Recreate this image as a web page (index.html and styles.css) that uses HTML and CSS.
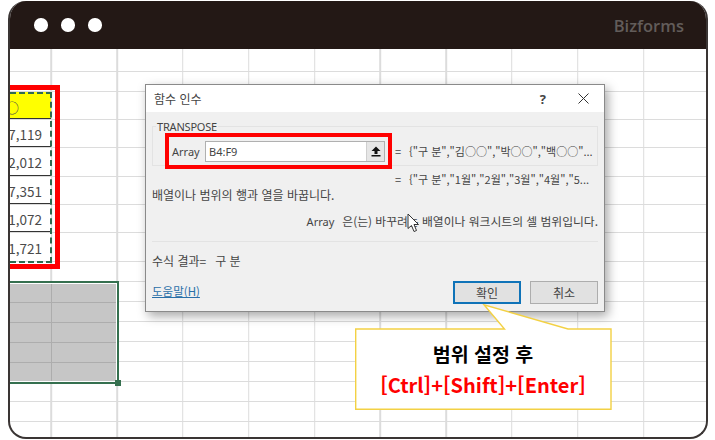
FILE: index.html
```html
<!doctype html>
<html lang="ko">
  <head>
    <meta charset="utf-8">
    <meta name="viewport" content="width=device-width, initial-scale=1">
    <title>함수 인수</title>
    <link rel="stylesheet" href="styles.css">
  </head>
  <body>
    <div class="window">
      <div class="titlebar">
        <div class="dots">
          <span class="dot"></span>
          <span class="dot"></span>
          <span class="dot"></span>
        </div>
        <div class="brand">Bizforms</div>
      </div>

      <div class="sheet">
        <div class="row row-23"></div>
        <div class="row row-20"></div>
        <div class="row row-28"><div class="cell cell-head">○</div></div>
        <div class="row row-28"><div class="cell">7,119</div></div>
        <div class="row row-29"><div class="cell">2,012</div></div>
        <div class="row row-28"><div class="cell">7,351</div></div>
        <div class="row row-28"><div class="cell">1,072</div></div>
        <div class="row row-29"><div class="cell cell-last">1,721</div></div>
        <div class="row row-20"></div>
        <div class="row row-20"></div>
        <div class="row row-20"></div>
        <div class="row row-20"></div>
        <div class="row row-20"></div>
        <div class="row row-20"></div>
        <div class="row row-20"></div>
        <div class="row row-20"></div>
      </div>
    </div>

    <!-- things lying over the sheet -->
    <div class="marching-ants"></div>
    <div class="red-frame"></div>
    <div class="selection"><span class="fill-handle"></span></div>

    <div class="dialog">
      <div class="dialog-title">
        <span>함수 인수</span>
        <div class="dialog-controls">
          <span class="help-mark">?</span>
          <svg class="close-icon" width="11" height="11" viewBox="0 0 11 11">
            <path d="M0.5 0.5 L10.5 10.5 M10.5 0.5 L0.5 10.5" stroke="#333" stroke-width="1" fill="none"/>
          </svg>
        </div>
      </div>

      <div class="dialog-body">
        <div class="group">
          <span class="group-name">TRANSPOSE</span>
          <div class="arg-row">
            <span class="arg-label">Array</span>
            <div class="arg-input">
              <span class="arg-value">B4:F9</span>
              <span class="arg-button">
                <svg width="10" height="11" viewBox="0 0 10 11">
                  <path d="M5 0.5 L9.5 5 H6.5 V8 H3.5 V5 H0.5 Z" fill="#111"/>
                  <rect x="0.5" y="9" width="9" height="1.5" fill="#111"/>
                </svg>
              </span>
            </div>
          </div>
          <div class="arg-result">
            <span class="equals">=</span>
            <span>{"구 분","김○○","박○○","백○○"...</span>
          </div>
        </div>

        <div class="arg-result arg-result-2">
          <span class="equals">=</span>
          <span>{"구 분","1월","2월","3월","4월","5...</span>
        </div>

        <p class="desc">배열이나 범위의 행과 열을 바꿉니다.</p>
        <p class="arg-desc"><span class="arg-desc-name">Array</span>은(는) 바꾸려는 배열이나 워크시트의 셀 범위입니다.</p>

        <div class="divider"></div>
        <p class="result">수식 결과=<span class="result-value">구 분</span></p>

        <div class="dialog-foot">
          <span class="help-link">도움말(H)</span>
          <div class="buttons">
            <span class="btn btn-primary">확인</span>
            <span class="btn">취소</span>
          </div>
        </div>
      </div>
    </div>

    <svg class="cursor" width="13" height="20" viewBox="0 0 13 20">
      <path d="M1 1 V15.5 L4.5 12.5 L7 18.5 L9.5 17.5 L7 11.5 H11.5 Z" fill="#fff" stroke="#333" stroke-width="1"/>
    </svg>

    <div class="callout">
      <svg class="callout-shape" width="257" height="106" viewBox="0 0 257 106">
        <path d="M0.7 25 H149.5 L129 0.8 L213 25 H256 V105.3 H0.7 Z" fill="#fff" stroke="#f3d144" stroke-width="1.4"/>
      </svg>
      <div class="callout-text">
        <div class="callout-title">범위 설정 후</div>
        <div class="callout-keys">[Ctrl]+[Shift]+[Enter]</div>
      </div>
    </div>
  </body>
</html>
```

FILE: styles.css
```css
/* Reset */
* {
  margin: 0;
  padding: 0;
  box-sizing: border-box;
}

body {
  width: 715px;
  height: 440px;
  overflow: hidden;
  background-color: #fff;
  font-family: "Noto Sans CJK KR", "Noto Sans", sans-serif;
  color: #333;
}

/* Browser window frame */
.window {
  width: 700px;
  height: 438px;
  margin: 1px 0 0 8px;
  border: 2px solid #3a3534;
  border-top: none;
  border-radius: 18px;
  overflow: hidden;
  background-color: #fff;
}

.titlebar {
  height: 48px;
  display: flex;
  align-items: center;
  justify-content: space-between;
  padding: 0 22px 0 24px;
  background-color: #231815;
}

.dots {
  display: flex;
  gap: 13.5px;
}

.dot {
  width: 13.5px;
  height: 13.5px;
  border-radius: 50%;
  background-color: #fff;
}

.brand {
  font-family: "Open Sans", sans-serif;
  font-size: 16.5px;
  font-weight: 600;
  color: #625c5a;
}

/* Spreadsheet */
.sheet {
  height: 389px;
  background-image: repeating-linear-gradient(90deg, transparent 0, transparent 64.3px, #dcdcdc 64.3px, #dcdcdc 65.8px);
  background-position: -23.8px 0;
}

.row {
  border-bottom: 1.5px solid #dcdcdc;
}
.row-20 { height: 20px; }
.row-23 { height: 23px; }
.row-28 { height: 28px; }
.row-29 { height: 29px; }

.cell {
  width: 41px;
  height: 100%;
  display: flex;
  align-items: center;
  justify-content: flex-end;
  padding: 1px 9px 0 0;
  overflow: hidden;
  white-space: nowrap;
  font-size: 13.5px;
  background-color: #fff;
  border-bottom: 1px solid #333;
  color: #4a4a4a;
}

.cell-head {
  padding: 3px 32px 0 0;
  background-color: #ff0;
  font-size: 14px;
}

.cell-last {
  border-bottom: none;
}

/* Copy range and its red box */
.marching-ants {
  position: absolute;
  left: 10px;
  top: 92px;
  width: 42px;
  height: 171px;
  border: 2px dashed #2f6b4f;
  border-left: none;
}

.red-frame {
  position: absolute;
  left: 10px;
  top: 85px;
  width: 50px;
  height: 184px;
  border: 5px solid #f00;
  border-left: none;
}

/* Paste range */
.selection {
  position: absolute;
  left: 10px;
  top: 281px;
  width: 109px;
  height: 103px;
  border: 2px solid #35704f;
  border-left: none;
  box-shadow: inset -1px -1px 0 #fff, inset 0 1px 0 #fff;
  background-color: #c6c6c6;
  background-image:
    linear-gradient(180deg, transparent 19px, #adadad 19px, #adadad 20.5px, transparent 20.5px, transparent 39px, #adadad 39px, #adadad 40.5px, transparent 40.5px, transparent 59px, #adadad 59px, #adadad 60.5px, transparent 60.5px, transparent 79px, #adadad 79px, #adadad 80.5px, transparent 80.5px),
    linear-gradient(90deg, transparent 40.5px, #adadad 40.5px, #adadad 42px, transparent 42px);
}

.fill-handle {
  position: absolute;
  right: -3.5px;
  bottom: -3.5px;
  width: 6px;
  height: 6px;
  background-color: #35704f;
}

/* Function arguments dialog */
.dialog {
  position: absolute;
  left: 145px;
  top: 84px;
  width: 460px;
  height: 228px;
  border: 1px solid #8a8a8a;
  border-width: 1px 1.5px 1.5px 1.5px;
  background-color: #f0f0f0;
  box-shadow: 3px 4px 10px rgba(0, 0, 0, 0.35);
  font-size: 12px;
  color: #444;
}

.dialog-title {
  height: 27px;
  display: flex;
  align-items: center;
  justify-content: space-between;
  padding: 0 15px 0 8px;
  background-color: #fff;
}

.dialog-controls {
  display: flex;
  align-items: center;
  gap: 32px;
}

.help-mark {
  font-family: "Open Sans", sans-serif;
  font-size: 13px;
  font-weight: 700;
}

.dialog-body {
  padding: 14px 6px 0;
}

.group {
  position: relative;
  height: 40px;
  border: 1px solid #e3e3e3;
}

.group-name {
  position: absolute;
  left: 3px;
  top: -7px;
  padding: 0 1px;
  background-color: #f0f0f0;
  font-family: "Noto Sans", sans-serif;
  font-size: 11px;
  line-height: 13px;
  letter-spacing: -0.2px;
}

.arg-row {
  position: absolute;
  left: 12px;
  top: 6px;
  width: 227px;
  height: 36px;
  display: flex;
  align-items: center;
  border: 4px solid #f00;
}

.arg-label {
  width: 36px;
  padding-left: 3px;
  font-family: "Noto Sans", sans-serif;
  font-size: 11px;
}

.arg-input {
  width: 180px;
  height: 21px;
  display: flex;
  align-items: center;
  justify-content: space-between;
  border: 1px solid #b0b0b0;
  background-color: #fff;
}

.arg-value {
  padding-left: 3px;
  font-family: "Noto Sans", sans-serif;
  font-size: 11px;
}

.arg-button {
  width: 18px;
  height: 19px;
  display: flex;
  align-items: center;
  justify-content: center;
  background-color: #e6e6e6;
  border-left: 1px solid #cfcfcf;
}

.arg-result {
  position: absolute;
  left: 242px;
  top: 16px;
  display: flex;
  white-space: nowrap;
  font-size: 11px;
  line-height: 16px;
}

.equals {
  width: 14px;
}

.arg-result-2 {
  position: static;
  margin: 5px 0 0 243px;
}

.desc {
  margin-top: 0;
  line-height: 16px;
}

.arg-desc {
  margin-top: 10px;
  line-height: 16px;
  font-size: 11.8px;
  text-align: right;
}

.arg-desc-name {
  margin-right: 8px;
  font-family: "Noto Sans", sans-serif;
  font-size: 11px;
}

.divider {
  height: 1px;
  margin-top: 11px;
  background-color: #e3e3e3;
}

.result {
  margin-top: 11px;
  line-height: 16px;
}

.result-value {
  margin-left: 9px;
}

.dialog-foot {
  display: flex;
  align-items: center;
  justify-content: space-between;
  margin-top: 12px;
}

.help-link {
  margin-bottom: 3px;
  font-size: 11.5px;
  color: #2a6fa8;
  text-decoration: underline;
}

.buttons {
  display: flex;
  gap: 9px;
}

.btn {
  width: 68px;
  height: 23px;
  display: flex;
  align-items: center;
  justify-content: center;
  background-color: #e1e1e1;
  border: 1px solid #adadad;
}

.btn-primary {
  border: 2px solid #0f73b8;
}

.cursor {
  position: absolute;
  left: 407px;
  top: 213px;
}

/* Yellow callout */
.callout {
  position: absolute;
  left: 355px;
  top: 304px;
  width: 257px;
  height: 106px;
}

.callout-shape {
  display: block;
}

.callout-text {
  position: absolute;
  left: 0;
  width: 256px;
  top: 25px;
  height: 81px;
  display: flex;
  flex-direction: column;
  align-items: center;
  justify-content: center;
  gap: 4px;
  font-weight: 700;
  text-align: center;
}

.callout-title {
  font-size: 19.5px;
  line-height: 26px;
  color: #000;
}

.callout-keys {
  font-size: 20px;
  line-height: 28px;
  color: #f00;
}
```
